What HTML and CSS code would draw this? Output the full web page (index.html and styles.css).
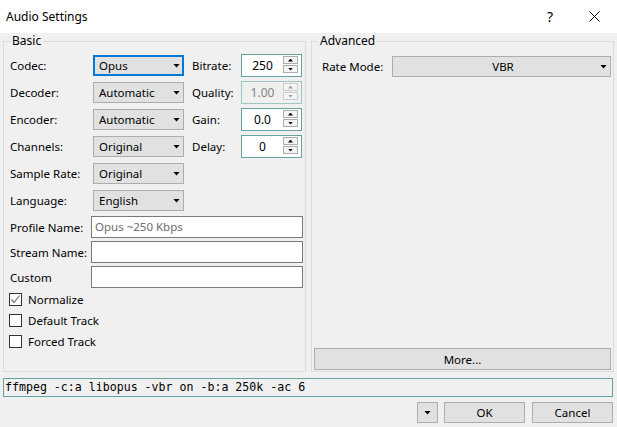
FILE: index.html
```html
<!DOCTYPE html>
<html>
<head>
<meta charset="utf-8">
<title>Audio Settings</title>
<link rel="stylesheet" href="styles.css">
</head>
<body>
<div class="titlebar">
  <span class="title">Audio Settings</span>
  <span class="tb-help">?</span>
  <span class="tb-close"><svg width="11" height="11" viewBox="0 0 11 11"><path d="M0.5 0.5L10.5 10.5M10.5 0.5L0.5 10.5" stroke="#000" stroke-width="1" fill="none"/></svg></span>
</div>
<div class="client">
  <div class="groups">
    <fieldset class="group basic">
      <legend>Basic</legend>
      <div class="row">
        <span class="lbl">Codec:</span>
        <div class="combo focus"><span class="ctext">Opus</span><i class="arrow"></i></div>
        <span class="lbl2">Bitrate:</span>
        <div class="spin"><span class="val">250</span><div class="spin-btns"><b class="sbtn"><i class="up"></i></b><b class="sbtn"><i class="down"></i></b></div></div>
      </div>
      <div class="row">
        <span class="lbl">Decoder:</span>
        <div class="combo"><span class="ctext">Automatic</span><i class="arrow"></i></div>
        <span class="lbl2">Quality:</span>
        <div class="spin disabled"><span class="val">1.00</span><div class="spin-btns"><b class="sbtn"><i class="up"></i></b><b class="sbtn"><i class="down"></i></b></div></div>
      </div>
      <div class="row">
        <span class="lbl">Encoder:</span>
        <div class="combo"><span class="ctext">Automatic</span><i class="arrow"></i></div>
        <span class="lbl2">Gain:</span>
        <div class="spin"><span class="val">0.0</span><div class="spin-btns"><b class="sbtn"><i class="up"></i></b><b class="sbtn"><i class="down"></i></b></div></div>
      </div>
      <div class="row">
        <span class="lbl">Channels:</span>
        <div class="combo"><span class="ctext">Original</span><i class="arrow"></i></div>
        <span class="lbl2">Delay:</span>
        <div class="spin"><span class="val">0</span><div class="spin-btns"><b class="sbtn"><i class="up"></i></b><b class="sbtn"><i class="down"></i></b></div></div>
      </div>
      <div class="row">
        <span class="lbl">Sample Rate:</span>
        <div class="combo"><span class="ctext">Original</span><i class="arrow"></i></div>
      </div>
      <div class="row">
        <span class="lbl">Language:</span>
        <div class="combo"><span class="ctext">English</span><i class="arrow"></i></div>
      </div>
      <div class="fields">
        <div class="trow"><span class="tlbl">Profile Name:</span><div class="tbox placeholder">Opus ~250 Kbps</div></div>
        <div class="trow"><span class="tlbl">Stream Name:</span><div class="tbox"></div></div>
        <div class="trow"><span class="tlbl">Custom</span><div class="tbox"></div></div>
      </div>
      <div class="checks">
        <div class="check"><span class="cbox"><svg width="11" height="11" viewBox="0 0 11 11"><path d="M1.5 5.5L4 8.5L9.5 1.5" stroke="#707070" stroke-width="1.2" fill="none"/></svg></span><span>Normalize</span></div>
        <div class="check"><span class="cbox"></span><span>Default Track</span></div>
        <div class="check"><span class="cbox"></span><span>Forced Track</span></div>
      </div>
    </fieldset>
    <fieldset class="group advanced">
      <legend>Advanced</legend>
      <div class="arow">
        <span class="lbl-rm">Rate Mode:</span>
        <div class="combo wide"><span class="ctext center">VBR</span><i class="arrow"></i></div>
      </div>
      <div class="btn more">More...</div>
    </fieldset>
  </div>
  <div class="cmd">ffmpeg -c:a libopus -vbr on -b:a 250k -ac 6</div>
  <div class="btns">
    <div class="btn drop"><i class="arrow"></i></div>
    <div class="btn ok">OK</div>
    <div class="btn cancel">Cancel</div>
  </div>
</div>
</body>
</html>
```
FILE: styles.css
```css
* { box-sizing: border-box; }
html, body { margin: 0; padding: 0; }
body {
  width: 617px;
  height: 427px;
  overflow: hidden;
  background: #f0f0f0;
  font-family: "Noto Sans", "Open Sans", sans-serif;
  font-size: 11.5px;
  color: #000;
}
.titlebar {
  height: 33px;
  background: #fff;
  display: flex;
  align-items: center;
}
.title { flex: 1; padding-left: 6px; font-size: 12px; }
.tb-help { width: 46px; text-align: center; font-size: 14px; }
.tb-close { width: 44px; display: flex; justify-content: center; padding-right: 2px; }
.tb-close svg { display: block; }

.client { padding: 0 4px 0 3px; }
.groups { display: flex; gap: 5px; height: 339px; }
fieldset.group {
  margin: 0;
  min-width: 0;
  border: 1px solid #dcdcdc;
  flex: 0 0 303px;
}
legend { font-size: 12px; line-height: 16px; padding: 0 2px; }
.basic {
  padding: 6px 0 0 6px;
  display: flex;
  flex-direction: column;
}

.row { display: flex; align-items: center; height: 21px; margin-bottom: 6px; }
.lbl { width: 83px; white-space: nowrap; }
.lbl2 { width: 49px; margin-left: 8px; white-space: nowrap; }

.combo {
  width: 91px;
  height: 21px;
  background: #e1e1e1;
  border: 1px solid #adadad;
  display: flex;
  align-items: center;
  padding: 0 3px 0 5px;
}
.combo.focus { border: 2px solid #0078d7; padding-left: 4px; padding-right: 2px; }
.ctext { flex: 1; white-space: nowrap; }
.ctext.center { text-align: center; padding-left: 8px; }
.arrow {
  display: block;
  width: 7px;
  height: 4px;
  background: #000;
  clip-path: polygon(0 0, 100% 0, 50% 100%);
}

.spin {
  width: 61px;
  height: 23px;
  border: 1px solid #65a3a3;
  background: #fff;
  display: flex;
  align-items: flex-start;
  padding: 1px 3px 0 0;
}
.spin .val { flex: 1; text-align: center; line-height: 20px; font-size: 12px; }
.spin-btns { display: flex; flex-direction: column; gap: 1px; }
.sbtn {
  display: flex;
  align-items: center;
  justify-content: center;
  width: 15px;
  height: 8px;
  border: 1px solid #adadad;
  background: #f4f4f4;
}
.sbtn i { display: block; width: 5px; height: 3px; background: #000; }
.sbtn .up { clip-path: polygon(50% 0, 100% 100%, 0 100%); }
.sbtn .down { clip-path: polygon(0 0, 100% 0, 50% 100%); }
.spin.disabled { background: #f0f0f0; border-color: #9cc6c6; }
.spin.disabled .val { color: #838383; }
.spin.disabled .sbtn { border-color: #cccccc; }
.spin.disabled .sbtn i { background: #a0a0a0; }

.fields { margin-top: -4px; }
.trow { display: flex; align-items: center; height: 22px; margin-top: 3px; }
.tlbl { width: 81px; white-space: nowrap; }
.tbox {
  width: 212px;
  height: 22px;
  border: 1px solid #7a7a7a;
  background: #fff;
  padding: 0 3px;
  line-height: 20px;
}
.tbox.placeholder { color: #6d6d6d; }

.checks { margin-top: 1px; margin-left: -1px; }
.check { display: flex; align-items: center; height: 21px; }
.cbox {
  width: 13px;
  height: 13px;
  border: 1px solid #333;
  background: #fff;
  margin-right: 6px;
  display: flex;
  align-items: center;
  justify-content: center;
}
.cbox svg { display: block; }

.advanced {
  padding: 7px 2px 1px 2px;
  display: flex;
  flex-direction: column;
}
.advanced legend { margin-left: 4px; }
.arow { display: flex; align-items: center; margin-left: 8px; }
.lbl-rm { width: 70px; white-space: nowrap; }
.combo.wide { flex: 1; width: auto; }

.btn {
  background: #e1e1e1;
  border: 1px solid #adadad;
  display: flex;
  align-items: center;
  justify-content: center;
}
.more { margin-top: auto; height: 22px; }

.cmd {
  margin-top: 6px;
  height: 19px;
  border: 1px solid #65a3a3;
  font-family: "DejaVu Sans Mono", monospace;
  font-size: 11.6px;
  line-height: 17px;
  padding-left: 1px;
  white-space: nowrap;
}
.btns { display: flex; justify-content: flex-end; margin-top: 5px; }
.btns .btn { height: 21px; }
.drop { width: 21px; margin-right: 6px; }
.ok { width: 81px; margin-right: 7px; }
.cancel { width: 81px; }
```
